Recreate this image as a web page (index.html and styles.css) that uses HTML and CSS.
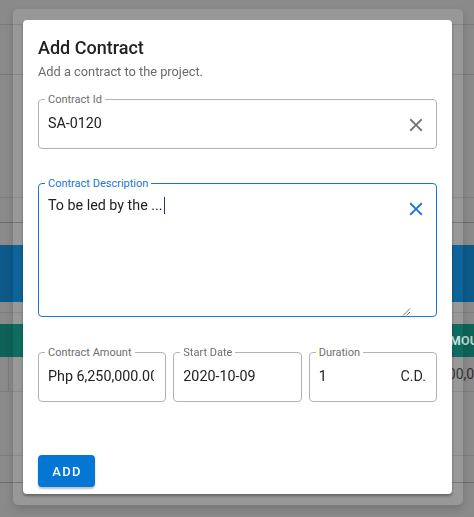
FILE: index.html
```html
<!DOCTYPE html>
<html>
<head>
<meta charset="utf-8">
<link rel="stylesheet" href="styles.css">
</head>
<body>
<div class="page">
  <div class="bg-row h25 line"></div>
  <div class="bg-row h49 line"></div>
  <div class="bg-row h122 line-light"></div>
  <div class="bg-row h25 line-dark"></div>
  <div class="bg-row h21"></div>
  <div class="bg-blue"></div>
  <div class="bg-row h10 line-light"></div>
  <div class="bg-row h10"></div>
  <div class="bg-teal"><span class="teal-text">AMOUNT</span></div>
  <div class="bg-cells">
    <div class="cell-a"></div>
    <div class="cell-b"><span class="cell-text">000,000</span></div>
  </div>
  <div class="bg-row h63 line-light"></div>
  <div class="bg-row h26 line-dark"></div>
</div>

<div class="backdrop-panel"></div>

<div class="dialog">
  <h1 class="title">Add Contract</h1>
  <p class="subtitle">Add a contract to the project.</p>

  <div class="field field-id">
    <span class="label">Contract Id</span>
    <span class="value">SA-0120</span>
    <svg class="clear" viewBox="0 0 24 24" width="22" height="22"><path fill="#757575" d="M19 6.41 17.59 5 12 10.59 6.41 5 5 6.41 10.59 12 5 17.59 6.41 19 12 13.41 17.59 19 19 17.59 13.41 12z"/></svg>
  </div>

  <div class="field field-desc">
    <span class="label label-focus">Contract Description</span>
    <span class="value value-desc">To be led by the ...<span class="caret"></span></span>
    <svg class="clear clear-desc" viewBox="0 0 24 24" width="22" height="22"><path fill="#1976d2" d="M19 6.41 17.59 5 12 10.59 6.41 5 5 6.41 10.59 12 5 17.59 6.41 19 12 13.41 17.59 19 19 17.59 13.41 12z"/></svg>
    <svg class="resize" viewBox="0 0 9 8" width="9" height="8"><path d="M1 7.5 8 0.5 M4.5 7.5 8 4" stroke="#555" stroke-width="0.8" fill="none"/></svg>
  </div>

  <div class="row3">
    <div class="field small amount">
      <span class="label">Contract Amount</span>
      <span class="value clip">Php 6,250,000.00</span>
    </div>
    <div class="field small">
      <span class="label">Start Date</span>
      <span class="value">2020-10-09</span>
    </div>
    <div class="field small">
      <span class="label">Duration</span>
      <span class="value clip">1</span>
      <span class="adorn">C.D.</span>
    </div>
  </div>

  <button class="add-btn">ADD</button>
</div>
</body>
</html>
```

FILE: styles.css
```css
* { box-sizing: border-box; }
html, body { margin: 0; padding: 0; }
body {
  width: 474px;
  height: 517px;
  overflow: hidden;
  background: #8a8a8a;
  font-family: Roboto, "Liberation Sans", sans-serif;
  position: relative;
}
.page { width: 474px; }
.bg-row { width: 100%; }
.h25 { height: 25px; }
.h49 { height: 50px; }
.h122 { height: 123px; }
.h21 { height: 22px; }
.h10 { height: 11px; }
.h63 { height: 64px; }
.h26 { height: 27px; }
.line { border-bottom: 1px solid #7a7a7a; }
.line-light { border-bottom: 1px solid #7e7e7e; }
.line-dark { border-bottom: 1px solid #6c6c6c; }
.bg-blue { height: 57px; background: #0d5a8a; }
.bg-teal {
  height: 33px;
  background: #0e6257;
  padding-left: 441px;
  white-space: nowrap;
  overflow: hidden;
  display: flex;
  align-items: center;
}
.teal-text { color: #b8cfcb; font-size: 12.5px; font-weight: 700; letter-spacing: 0.3px; }
.bg-cells {
  height: 35px;
  display: flex;
  border-bottom: 1px solid #7e7e7e;
}
.cell-a { width: 9px; border-right: 1px solid #7a7a7a; }
.cell-b {
  flex: 1;
  padding-left: 431px;
  white-space: nowrap;
  overflow: hidden;
  display: flex;
  align-items: center;
}
.cell-text { color: #2e2e2e; font-size: 14px; }

.backdrop-panel {
  position: absolute;
  left: 13px;
  top: 9px;
  width: 450px;
  height: 496px;
  border-radius: 5px;
  backdrop-filter: brightness(1.1);
  box-shadow: 0 4px 8px rgba(0,0,0,0.15);
}

.dialog {
  position: absolute;
  left: 23px;
  top: 20px;
  width: 429px;
  height: 474px;
  background: #fff;
  border-radius: 4px;
  padding: 16px 15px 0 15px;
  box-shadow: 0 2px 3px rgba(0,0,0,0.35);
}
.title {
  margin: 0;
  font-size: 18px;
  line-height: 24px;
  font-weight: 500;
  color: #212121;
}
.subtitle {
  margin: 4px 0 0 0;
  font-size: 12.8px;
  line-height: 16px;
  color: #6b6b6b;
}
.field {
  position: relative;
  height: 50px;
  border: 1px solid #b3b3b3;
  border-radius: 4px;
  display: flex;
  align-items: center;
  padding: 0 9px 0 9px;
  min-width: 0;
}
.field-id { margin-top: 19px; }
.label {
  position: absolute;
  left: 6px;
  top: -7px;
  padding: 0 3px;
  background: #fff;
  font-size: 11px;
  line-height: 13px;
  color: #6e6e6e;
  white-space: nowrap;
}
.label-focus { color: #1976d2; }
.value {
  flex: 1;
  min-width: 0;
  font-size: 14.3px;
  line-height: 20px;
  color: #222;
  white-space: nowrap;
  margin-bottom: 3px;
}
.clip { overflow: hidden; }
.clear { flex: none; margin-top: 1px; }
.field-desc {
  margin-top: 34px;
  height: 134px;
  border-color: #1976d2;
  align-items: flex-start;
  padding-top: 11px;
}
.value-desc { margin-bottom: 0; }
.caret {
  display: inline-block;
  width: 1px;
  height: 17px;
  background: #1f3f70;
  vertical-align: -4px;
  margin-left: 1px;
}
.clear-desc { margin-top: 3px; }
.resize {
  position: absolute;
  right: 25px;
  bottom: 0;
}
.row3 {
  margin-top: 35px;
  display: grid;
  grid-template-columns: minmax(0, 1fr) minmax(0, 1fr) minmax(0, 1fr);
  gap: 7px;
}
.small { padding-right: 8px; }
.amount { padding-right: 11px; }
.adorn {
  flex: none;
  font-size: 14.3px;
  line-height: 20px;
  color: #2a2a2a;
  margin-bottom: 3px;
  padding-right: 2px;
}
.add-btn {
  display: block;
  margin-top: 53px;
  width: 57px;
  height: 32px;
  border: none;
  border-radius: 4px;
  background: #0476d4;
  color: #fff;
  font-family: Roboto, "Liberation Sans", sans-serif;
  font-size: 13px;
  font-weight: 500;
  letter-spacing: 1.3px;
  padding: 0 0 0 1px;
  box-shadow: 0 2px 2px rgba(0,0,0,0.25);
}
```
